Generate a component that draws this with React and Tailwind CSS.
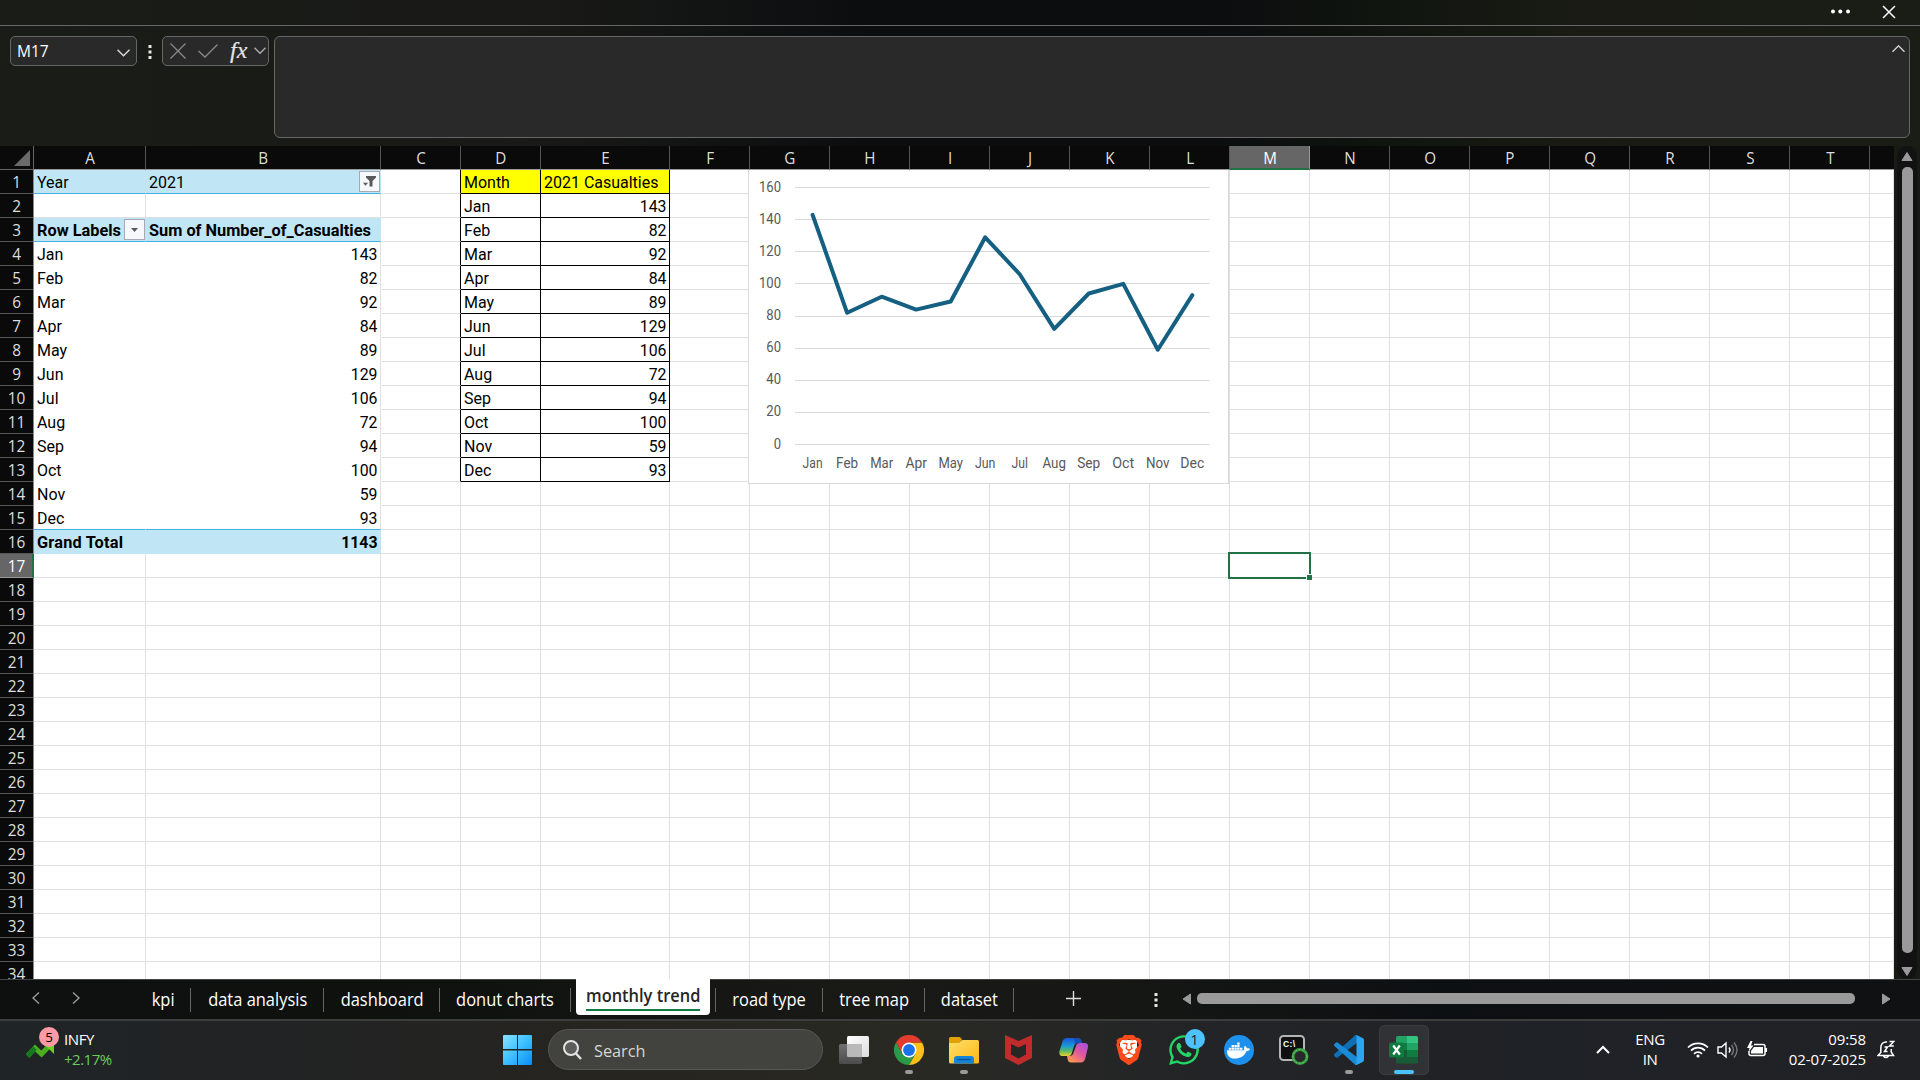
import React from "react";
import { FaWhatsapp, FaDocker } from "react-icons/fa";
import { SiBrave } from "react-icons/si";

const months = ["Jan", "Feb", "Mar", "Apr", "May", "Jun", "Jul", "Aug", "Sep", "Oct", "Nov", "Dec"];
const values = [143, 82, 92, 84, 89, 129, 106, 72, 94, 100, 59, 93];
const letters = "ABCDEFGHIJKLMNOPQRST".split("");
const rows = Array.from({ length: 34 }, (_, i) => i + 1);

const COLS =
  "grid grid-cols-[112px_235px_80px_80px_129px_80px_80px_80px_80px_80px_80px_80px_80px_80px_80px_80px_80px_80px_80px_80px_24px]";
const UI = "font-['Open_Sans','Noto_Sans',sans-serif]";

function CellText({ children, right, bold }) {
  return (
    <span
      className={
        "block whitespace-nowrap text-[17px] leading-[24px] text-black font-[Roboto,sans-serif] " +
        (right ? "origin-right scale-x-[0.93] " : bold ? "origin-left scale-x-[0.96] " : "origin-left scale-x-[0.94] ") +
        (bold ? "font-bold" : "")
      }
    >
      {children}
    </span>
  );
}

function cellFor(row, col) {
  const pivot = col < 2;
  if (pivot) {
    if (row === 1) return { t: col === 0 ? "Year" : "2021", cls: "bg-[#c0e6f5] border-b-[#45b0e1] border-r-[#c0e6f5]", icon: col === 1 ? "filter" : null };
    if (row === 3) return { t: col === 0 ? "Row Labels" : "Sum of Number_of_Casualties", bold: true, cls: "bg-[#c0e6f5] border-b-[#45b0e1] border-r-[#c0e6f5]", icon: col === 0 ? "down" : null };
    if (row >= 4 && row <= 15) {
      const edge = row === 15 ? "border-b-[#45b0e1] " : "border-b-white ";
      return { t: col === 0 ? months[row - 4] : values[row - 4], right: col === 1, cls: edge + (col === 0 ? "border-r-white" : "border-r-[#e0e0e0]") };
    }
    if (row === 16) return { t: col === 0 ? "Grand Total" : "1143", right: col === 1, bold: true, cls: "bg-[#c0e6f5] border-[#c0e6f5] " + (col === 0 ? "tracking-[0.2px]" : "") };
  }
  if (col === 2 && row <= 13) return { cls: "border-b-[#e0e0e0] border-r-black" };
  if (col === 3 || col === 4) {
    if (row === 1) return { t: col === 3 ? "Month" : "2021 Casualties", cls: "bg-[#ffff00] border-black" };
    if (row <= 13) return { t: col === 3 ? months[row - 2] : values[row - 2], right: col === 4, cls: "border-black" };
  }
  return { cls: "border-[#e0e0e0]" };
}

function Cell({ row, col }) {
  const c = cellFor(row, col);
  return (
    <div className={"relative h-6 overflow-hidden border-r border-b pr-[2.5px] pl-[3px] " + c.cls}>
      {c.t !== undefined && (
        <CellText right={c.right} bold={c.bold}>
          <span className={c.right ? "block text-right" : ""}>{c.t}</span>
        </CellText>
      )}
      {c.icon && (
        <span className="absolute top-[1px] right-0 flex h-[21px] w-[21px] items-center justify-center border border-[#a6a9b4] bg-[#f7f8fb]">
          {c.icon === "down" ? (
            <svg width="19" height="19"><path d="M6 8h7l-3.500 4z" fill="#595959" /></svg>
          ) : (
            <svg width="19" height="19"><path d="M6 4h10v1.500l-3.500 3.500v5.500h-3V9L6 5.500zM3 10.800h5l-2.500 3z" fill="#595959" /></svg>
          )}
        </span>
      )}
    </div>
  );
}

function Chart() {
  const px = (i) => 64.600 + i * 34.520;
  const py = (v) => 274.500 - v * 1.6062;
  return (
    <svg className="absolute top-0 left-[714px]" width="482" height="314" fontFamily="Roboto, sans-serif" fontSize="14" fill="#595959">
      <rect x="0.500" y="-1.500" width="480" height="315" fill="#fff" stroke="#d9d9d9" />
      {[0, 20, 40, 60, 80, 100, 120, 140, 160].map((v) => {
        const w = String(v).length * 7.350;
        return (
          <g key={v}>
            <path d={"M47 " + (Math.floor(py(v)) + 0.5) + "H461.500"} stroke="#d9d9d9" />
            <text x={33 - w} y={py(v) + 4} textLength={w} lengthAdjust="spacingAndGlyphs">{v}</text>
          </g>
        );
      })}
      {months.map((m, i) => (
        <text key={m} x={px(i)} y="298.400" textAnchor="middle" fontSize="13.800" textLength={[20, 22, 23, 21.500, 24.500, 20.500, 16.500, 23.500, 23, 22, 23.500, 24][i]} lengthAdjust="spacingAndGlyphs">{m}</text>
      ))}
      <polyline points={values.map((v, i) => px(i) + "," + py(v)).join(" ")} fill="none" stroke="#156082" strokeWidth="4" strokeLinecap="round" strokeLinejoin="round" />
    </svg>
  );
}

function Kebab({ className }) {
  return (
    <svg width="4" height="14" className={className} fill="#e6e6e6">
      <path d="M0.500 0h3v3h-3zM0.500 5.500h3v3h-3zM0.500 11h3v3h-3z" />
    </svg>
  );
}

function TopBar() {
  return (
    <header className="h-[146px] bg-[linear-gradient(90deg,#1a1c17_0%,#191a17_28%,#111313_38%,#0b0d0f_45%,#0b0d0f_63%,#10150f_72%,#191b14_82%,#1a1c16_100%)]">
      <div className="flex h-[26px] items-start justify-end border-b border-[#666]">
        <svg width="20" height="6" className="mt-[8px]" fill="#fff"><circle cx="3" cy="3.500" r="2" /><circle cx="10.300" cy="3.500" r="2" /><circle cx="18" cy="3.500" r="2" /></svg>
        <svg width="14" height="14" className="mt-[5px] mr-[24px] ml-[32px]" stroke="#fff" strokeWidth="1.500"><path d="M1 1l12 12M13 1L1 13" /></svg>
      </div>
      <div className="flex pt-[10px] pl-[10px]">
        <div className="flex h-[30px] w-[127px] items-center justify-between rounded-[5px] border border-[#666] bg-[#292929] pr-[6px] pl-[6px]">
          <span className={UI + " pt-px text-[15.500px] text-white"}>M17</span>
          <svg width="13" height="8" className="mt-[3px]" fill="none" stroke="#d8d8d8" strokeWidth="1.500"><path d="M0.500 0.800l6 6 6-6" /></svg>
        </div>
        <Kebab className="mt-[9px] ml-[10.5px]" />
        <div className="ml-[10.5px] flex h-[30px] w-[107px] items-center rounded-[5px] border border-[#666] bg-[#292929]">
          <svg width="16" height="16" className="ml-[7px]" stroke="#8a8a8a" strokeWidth="1.300"><path d="M0.500 0.500l15 15M15.500 0.500l-15 15" /></svg>
          <svg width="20" height="14" className="ml-[12px]" fill="none" stroke="#8a8a8a" strokeWidth="1.300"><path d="M0.500 7l6.500 6L19.500 0.500" /></svg>
          <span className="ml-[12px] w-[18px] pb-[3px] font-['Liberation_Serif',serif] text-[24px] leading-none text-[#e4e4e4] italic [-webkit-text-stroke:0.2px_#e4e4e4]">fx</span>
          <svg width="12" height="8" className="ml-[6px]" fill="none" stroke="#b0b0b0" strokeWidth="1.300"><path d="M0.500 0.800l5.500 5.500 5.500-5.500" /></svg>
        </div>
        <div className="ml-[5px] flex h-[102px] w-[1636px] justify-end rounded-[6px] border border-[#666] bg-[#292929] pt-[8px] pr-[4px]">
          <svg width="13" height="8" fill="none" stroke="#d8d8d8" strokeWidth="1.300"><path d="M0.500 6.800l6-6 6 6" /></svg>
        </div>
      </div>
    </header>
  );
}

function Sheet() {
  return (
    <div className="flex h-[833px]">
      <div className="w-[1894px] overflow-hidden">
        <div className="flex h-6 bg-[#0a0a0a]">
          <div className="flex w-[34px] shrink-0 items-end justify-end border-r border-b border-[#666] pr-[3px] pb-[3px]">
            <svg width="16" height="16"><path d="M16 0v16H0z" fill="#6a6a6a" /></svg>
          </div>
          <div className={COLS + " " + UI}>
            {letters.map((l) => (
              <div key={l} className={"h-6 border-r text-center text-[16px] leading-[25px] " + (l === "M" ? "border-b-2 border-r-[#999] border-b-[#217346] bg-[#666] text-white" : "border-b border-r-[#555] border-b-[#999] text-[#dedede]")}>
                <span className="relative left-[0.5px] inline-block scale-x-[0.95]">{l}</span>
              </div>
            ))}
            <div className="h-6 border-b border-[#999]" />
          </div>
        </div>
        <div className="flex h-[809px] overflow-hidden">
          <div className={"w-[34px] shrink-0 border-r border-[#888] bg-[#0a0a0a] text-center " + UI}>
            {rows.map((r) => (
              <div key={r} className={"h-6 border-b text-[16.500px] leading-[24px] " + (r === 17 ? "relative z-10 -mr-px border-r-2 border-r-[#217346] border-b-[#999] bg-[#666] text-white" : "border-[#555] text-[#dedede]")}>
                <span className="inline-block scale-x-[0.93]">{r}</span>
              </div>
            ))}
          </div>
          <div className="relative bg-white">
            <div className={COLS}>
              {rows.map((r) => [...letters, "U"].map((l, c) => <Cell key={l + r} row={r} col={c} />))}
            </div>
            <Chart />
            <div className="absolute top-[382px] left-[1194px] h-[27px] w-[83px] border-2 border-[#217346]">
              <span className="absolute -right-[3px] -bottom-[3px] h-[6px] w-[6px] border-t border-l border-white bg-[#217346]" />
            </div>
          </div>
        </div>
      </div>
      <div className="flex w-[26px] flex-col items-center bg-[#181a15]">
        <div className="mx-auto flex h-full w-[20px] flex-col items-center rounded-[10px] bg-[#121212]">
          <svg width="12" height="9" className="mt-[6px] shrink-0"><path d="M6 0.500l5 8H1z" fill="#9a9a9a" stroke="#9a9a9a" strokeLinejoin="round" /></svg>
          <div className="mt-[6px] h-[786px] w-[11px] shrink-0 rounded-[5px] bg-[#9a9a9a]" />
          <svg width="12" height="9" className="mt-[14px] shrink-0"><path d="M6 8.500l5-8H1z" fill="#9a9a9a" stroke="#9a9a9a" strokeLinejoin="round" /></svg>
        </div>
      </div>
    </div>
  );
}

function Tab({ children, className }) {
  return (
    <div className={"mt-[8px] flex h-[24px] items-center justify-center border-r border-[#666] pl-px text-[17.500px] text-white " + className}>
      <span className="-mt-px scale-x-[0.94] whitespace-nowrap">{children}</span>
    </div>
  );
}

function TabBar() {
  return (
    <div className={"flex h-[40px] border-t border-[#444] bg-[linear-gradient(90deg,#0e1010_0%,#10120f_25%,#191a16_45%,#171815_55%,#0d1012_75%,#101113_100%)] " + UI}>
      <svg width="50" height="12" className="mt-[12px] ml-[32px]" fill="none" stroke="#999" strokeWidth="1.400"><path d="M7 0.500L1 6l6 5.500M41 0.500L47 6l-6 5.500" /></svg>
      <Tab className="ml-[54px] w-[55px]">kpi</Tab>
      <Tab className="w-[133px]">data analysis</Tab>
      <Tab className="w-[116px]">dashboard</Tab>
      <Tab className="w-[131px]">donut charts</Tab>
      <div className="mt-[-1px] ml-[5px] h-[36px] w-[134px] rounded-b-[4px] bg-white px-[10px] pt-[4px]">
        <div className="h-[28px] border-b-2 border-[#107c41] text-center text-[17.300px] leading-[25px] font-semibold whitespace-nowrap text-[#262626]">
          <span className="-mx-4 inline-block scale-x-[0.95]">monthly trend</span>
        </div>
      </div>
      <div className="mt-[8px] ml-[5px] h-[24px] w-px bg-[#666]" />
      <Tab className="w-[107px]">road type</Tab>
      <Tab className="w-[102px]">tree map</Tab>
      <Tab className="w-[89px]">dataset</Tab>
      <svg width="15" height="15" className="mt-[11px] ml-[52px]" stroke="#ddd" strokeWidth="1.400"><path d="M7.500 0v15M0 7.500h15" /></svg>
      <Kebab className="mt-[13px] ml-[73px]" />
      <svg width="10" height="12" className="mt-[13px] ml-[24px]"><path d="M8.500 1v10L1 6z" fill="#9a9a9a" stroke="#9a9a9a" strokeLinejoin="round" /></svg>
      <div className="mt-[13px] ml-[5px] h-[11px] w-[658px] rounded-[5px] bg-[#9a9a9a]" />
      <svg width="10" height="12" className="mt-[13px] ml-[26px]"><path d="M1.500 1v10L9 6z" fill="#9a9a9a" stroke="#9a9a9a" strokeLinejoin="round" /></svg>
    </div>
  );
}

function Slot({ children, dot, active }) {
  return (
    <div className="flex w-[55px] justify-center pt-[4px]">
      <div className={"relative flex h-[50px] w-[50px] items-center justify-center rounded-[5px] " + (active ? "border border-[#3b3c3f] bg-[#303235]" : "")}>
        {children}
        {dot && <span className="absolute bottom-px h-[4px] w-[8px] rounded-full bg-[#999]" />}
        {active && <span className="absolute bottom-0 h-[4px] w-[20px] rounded-full bg-[#4cc2ff]" />}
      </div>
    </div>
  );
}

function Apps() {
  return (
    <>
      <Slot>
        <svg width="30" height="30">
          <defs>
            <linearGradient id="tv1" x1="0" y1="0" x2="0" y2="1"><stop stopColor="#707070" /><stop offset="1" stopColor="#4c4c4c" /></linearGradient>
            <linearGradient id="tv2" x1="0" y1="0" x2="1" y2="1"><stop stopColor="#fff" /><stop offset="1" stopColor="#dcdcdc" /></linearGradient>
          </defs>
          <rect x="8" y="1" width="22" height="21" rx="1.500" fill="url(#tv2)" />
          <rect x="0" y="9" width="23" height="20" rx="1.500" fill="url(#tv1)" />
          <path d="M8 9h15v13H9.500a1.500 1.500 0 0 1-1.500-1.500z" fill="#b9b9b9" />
        </svg>
      </Slot>
      <Slot dot>
        <svg width="30" height="30" viewBox="0 0 48 48">
          <path d="M24 12H44.800A24 24 0 0 1 24 48L34.400 30z" fill="#fbc116" />
          <path d="M13.600 30L3.200 12A24 24 0 0 0 24 48L34.400 30z" fill="#2a9a48" />
          <path d="M24 12H44.800A24 24 0 0 0 3.200 12L13.600 30z" fill="#e33b2e" />
          <circle cx="24" cy="24" r="12" fill="#fff" />
          <circle cx="24" cy="24" r="9.500" fill="#1a73e8" />
        </svg>
      </Slot>
      <Slot dot>
        <svg width="30" height="28">
          <defs><linearGradient id="fo" x1="0" y1="0" x2="1" y2="1"><stop stopColor="#ffdf6b" /><stop offset="1" stopColor="#fdb813" /></linearGradient></defs>
          <path d="M0 2.500Q0 1 1.500 1H10q1.200 0 2 1.200L13 4l-3 4H0z" fill="#e3a008" />
          <path d="M0 7h10l3.500-3H28.500Q30 4 30 5.500V26q0 1.500-1.500 1.500h-27Q0 27.500 0 26z" fill="url(#fo)" />
          <path d="M5 27.500V23q0-3 3-3h14q3 0 3 3v4.500z" fill="#1583d8" />
          <path d="M8.500 23.500h13" stroke="#0b4f94" strokeWidth="1.300" />
        </svg>
      </Slot>
      <Slot>
        <svg width="27" height="30"><path d="M0 0L13.500 6 27 0V23L13.500 30 0 23zM6 9V19.500L13.500 23.500 21 19.500V9L13.500 12.500z" fill="#c02b2b" fillRule="evenodd" /></svg>
      </Slot>
      <Slot>
        <svg width="30" height="28" viewBox="0 0 30 28">
          <defs>
            <linearGradient id="ca" x1="0" y1="0" x2="0" y2="1"><stop stopColor="#1557d8" /><stop offset="0.450" stopColor="#1c9ad6" /><stop offset="0.700" stopColor="#52b86a" /><stop offset="1" stopColor="#ecd22e" /></linearGradient>
            <linearGradient id="cb" x1="1" y1="0" x2="0.200" y2="1"><stop stopColor="#9b52e8" /><stop offset="0.500" stopColor="#e0569f" /><stop offset="1" stopColor="#ff9a4d" /></linearGradient>
          </defs>
          <path d="M8 2h11q2.500 0 3.200 2.500L23 7h-4q-3 0-4 3l-2.500 8q-.8 2-3 2H4q-4.500 0-3.500-5L3.500 5.500Q4.500 2 8 2z" fill="url(#ca)" />
          <path d="M22 26.500H12q-2.500 0-3.200-2.500L8 20h2.500q3 0 4-3L17 10q.8-3 4-3h4.500q4.500 0 3.300 5l-2.600 10.500q-1 4-4.200 4z" fill="url(#cb)" />
          <path d="M15 2h4q2.500 0 3.200 2.500L23 7h-4q-2 0-3 1.500z" fill="#174fb8" />
        </svg>
      </Slot>
      <Slot>
        <span className="relative flex h-[30px] w-[26px] items-center justify-center">
          <span className="absolute top-[5px] h-[18px] w-[17px] rounded-b-[8px] bg-white" />
          <SiBrave size={30} className="relative shrink-0 text-[#fb4a1b]" />
        </span>
      </Slot>
      <Slot>
        <FaWhatsapp size={34} color="#25d366" />
        <span className={"absolute top-[4px] right-[4px] flex h-[20px] w-[20px] items-center justify-center rounded-full bg-[#4cc2ff] text-[14px] text-[#10202c] " + UI}>1</span>
      </Slot>
      <Slot>
        <span className="flex h-[30px] w-[30px] items-center justify-center rounded-full bg-[#1d90ed]"><FaDocker size={23} color="#fff" /></span>
      </Slot>
      <Slot>
        <svg width="30" height="30">
          <rect x="1" y="1" width="24" height="24" rx="3.500" fill="#111" stroke="#b5b5b5" strokeWidth="2" />
          <text x="4" y="12" fontFamily="Liberation Sans, sans-serif" fontWeight="bold" fontSize="8.500" fill="#fff" textLength="12">C:\</text>
          <circle cx="21" cy="21.500" r="7" fill="#26282a" stroke="#3b9e44" strokeWidth="3" />
          <circle cx="21" cy="21.500" r="7" fill="none" stroke="#6ccf6c" strokeWidth="1" strokeDasharray="1.500 2" />
        </svg>
      </Slot>
      <Slot dot>
        <svg width="30" height="30" viewBox="0 0 100 100">
          <path d="M96.500 10.800L75.900.900a6.200 6.200 0 0 0-7.100 1.200L1.300 63.600a4.200 4.200 0 0 0 0 6.200l5.500 5a4.200 4.200 0 0 0 5.300.2L93.400 13.400a4.100 4.100 0 0 1 6.600 3.300v-.200a6.300 6.300 0 0 0-3.500-5.700z" fill="#0f6fb5" />
          <path d="M96.500 89.200L75.900 99.100a6.200 6.200 0 0 1-7.100-1.200L1.300 36.400a4.200 4.200 0 0 1 0-6.200l5.500-5a4.200 4.200 0 0 1 5.300-.2l81.300 61.600a4.100 4.100 0 0 0 6.600-3.300v.200a6.300 6.300 0 0 1-3.500 5.700z" fill="#1a8ad4" />
          <path d="M75.900 99.100a6.200 6.200 0 0 1-7.100-1.200c2.300 2.300 6.200.7 6.200-2.600V4.700c0-3.300-3.900-4.900-6.200-2.600a6.200 6.200 0 0 1 7.100-1.200l20.600 9.900a6.300 6.300 0 0 1 3.500 5.600v67.200a6.300 6.300 0 0 1-3.500 5.600z" fill="#2ba5f2" />
        </svg>
      </Slot>
      <Slot active>
        <svg width="29" height="28">
          <path d="M8.500 0H18v7H7V1.500Q7 0 8.500 0z" fill="#21a366" /><path d="M18 0h9.500Q29 0 29 1.500V7H18z" fill="#33c481" />
          <path d="M7 7h11v7H7z" fill="#107c41" /><path d="M18 7h11v7H18z" fill="#21a366" />
          <path d="M7 14h11v7H7z" fill="#185c37" /><path d="M18 14h11v7H18z" fill="#107c41" /><path d="M7 21h22v5.500Q29 27.500 28 27.500H8.500Q7 27.500 7 26z" fill="#185c37" />
          <rect x="0" y="6.500" width="15" height="15" rx="1.500" fill="#0f7a40" />
          <path d="M4.200 9.500l6.600 9M10.800 9.500l-6.600 9" stroke="#fff" strokeWidth="2.200" />
        </svg>
      </Slot>
    </>
  );
}

function Taskbar() {
  return (
    <footer className={"flex h-[61px] border-t-2 border-[#3c3e3e] bg-[linear-gradient(90deg,#1f2426_0%,#232323_20%,#26251f_33%,#292924_48%,#232426_62%,#1f2226_80%,#1f2125_100%)] " + UI}>
      <div className="relative mt-[9px] ml-[26px] h-[40px] w-[478px]">
        <svg width="30" height="32" className="absolute top-px left-0">
          <path d="M1.500 25L9 17l6.500 6L26 12" fill="none" stroke="#4caf1e" strokeWidth="5" />
          <path d="M1.500 25L9 17" stroke="#157a1d" strokeWidth="5" />
          <path d="M14 9h14v14z" fill="#6fd01c" />
        </svg>
        <span className="absolute -top-[3px] left-[13px] flex h-[20px] w-[20px] items-center justify-center rounded-full bg-[#ff99a4] text-[13.500px] text-black">5</span>
        <div className="-mt-px ml-[38px] text-[15px] leading-[20px] tracking-[-0.4px] text-white">INFY</div>
        <div className="ml-[38px] text-[15px] leading-[20px] tracking-[-0.5px] text-[#6ccb5f]">+2.17%</div>
      </div>
      <svg width="29" height="30" className="mt-[14px] ml-[-1px]">
        <defs><linearGradient id="wn" x1="0" y1="0" x2="1" y2="1"><stop stopColor="#8ae2ff" /><stop offset="0.500" stopColor="#3cc0ff" /><stop offset="1" stopColor="#0a8cf5" /></linearGradient></defs>
        <path d="M0 1Q0 0 1 0H14V14H0zM15 0H28q1 0 1 1V14H15zM0 15.500H14V30H1Q0 30 0 29zM15 15.500H29V29q0 1-1 1H15z" fill="url(#wn)" />
      </svg>
      <div className="mt-[8px] ml-[16px] flex h-[41px] w-[275px] items-center rounded-full border border-[#575855] bg-[#42423e]">
        <svg width="19" height="20" className="ml-[14px]" fill="none" stroke="#e4e4e4" strokeWidth="2"><circle cx="8" cy="8" r="7" fill="#5c5d5b" /><path d="M13 13.500l5 5.500" strokeWidth="2.400" /></svg>
        <span className="ml-[12px] origin-left scale-x-[0.97] pt-[2px] text-[16.800px] text-[#d6d6d3]">Search</span>
      </div>
      <div className="ml-[3px] flex"><Apps /></div>
      <div className="ml-auto flex text-[15px] leading-[20px] text-white">
        <svg width="14" height="9" className="mt-[24px]" fill="none" stroke="#fff" strokeWidth="2"><path d="M1 8l6-6 6 6" /></svg>
        <div className="mt-[8px] ml-[20px] w-[40px] text-center tracking-[-0.4px]">ENG<br />IN</div>
        <svg width="22" height="18" className="mt-[20px] ml-[17px]" fill="none" stroke="#fff" strokeWidth="1.700"><path d="M1 6.500a14 14 0 0 1 20 0M4 9.700a9.700 9.700 0 0 1 14 0M7 12.800a5.600 5.600 0 0 1 8 0" /><circle cx="11" cy="15" r="1.600" fill="#fff" stroke="none" /></svg>
        <svg width="22" height="18" className="mt-[20px] ml-[8px]" fill="none" stroke="#fff" strokeWidth="1.400"><path d="M1 6h3.500L9 2v14l-4.500-4H1zM12 6.500q2 2.500 0 5" /><path d="M14.500 4q4 5 0 10M17 1.500q6 7.500 0 15" stroke="#777" /></svg>
        <svg width="21" height="17" className="mt-[20px] ml-[8px]" fill="none" stroke="#fff" strokeWidth="1.500"><path d="M7 3.500h9q2 0 2 2v7q0 2-2 2H4q-2 0-2-2V10M19.300 7v4" /><path d="M7 6h9v6.500H4V10z" fill="#fff" stroke="none" /><path d="M3.500 0L0 7h2.500L1.500 11 6.500 4.500H4L5.500 0z" fill="#fff" stroke="none" /></svg>
        <div className="mt-[8px] ml-[14px] w-[84px] text-right tracking-[-0.1px] whitespace-nowrap">09:58<br /><span className="-ml-4">02-07-2025</span></div>
        <svg width="18" height="19" className="mt-[19px] mr-[25px] ml-[11px]" fill="none" stroke="#fff" strokeWidth="1.500"><path d="M10 2Q4 1.500 3.800 8v4.500L1 15.500h15.500l-2.300-3.500V9M6.500 16q2.500 3.200 5 0" /><path d="M7.500 7h3l-3 4.500h3M12.500 1.500h4.300l-4.300 4.500h4.300" /></svg>
      </div>
    </footer>
  );
}

export default function App() {
  return (
    <div className="h-[1080px] w-[1920px] overflow-hidden bg-[#111]">
      <TopBar />
      <Sheet />
      <TabBar />
      <Taskbar />
    </div>
  );
}
